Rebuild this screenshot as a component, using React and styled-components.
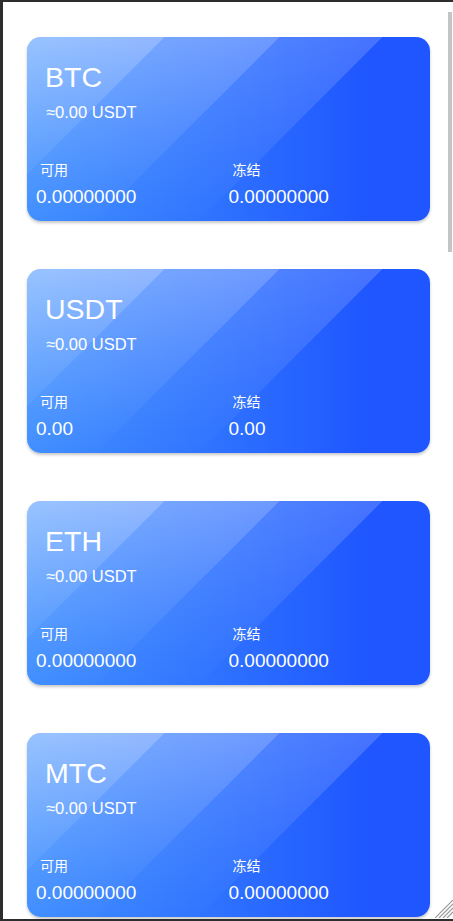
import React from "react";
import styled, { createGlobalStyle } from "styled-components";

const GlobalStyle = createGlobalStyle`
  html, body {
    margin: 0;
    padding: 0;
    background: #fff;
  }
  body {
    font-family: "Liberation Sans", "Noto Sans CJK SC", Arial, sans-serif;
  }
`;

const Frame = styled.div`
  position: relative;
  box-sizing: border-box;
  width: 453px;
  height: 921px;
  overflow: hidden;
  border-top: 2px solid #2d2d2d;
  border-left: 3px solid #2d2d2d;
  border-bottom: 2px solid #2d2d2d;
  background: #fff;
`;

const List = styled.div`
  display: flex;
  flex-direction: column;
  gap: 48px;
  padding: 35px 23px 0 24px;
`;

const Card = styled.div`
  position: relative;
  overflow: hidden;
  height: 184px;
  border-radius: 14px;
  display: flex;
  flex-direction: column;
  color: #fff;
  background: linear-gradient(to right, #3e8eff 0%, #2d70ff 50%, #1f56ff 85%);
  box-shadow: 0 2px 3px rgba(0, 0, 0, 0.22);

  &::before {
    content: "";
    position: absolute;
    inset: 0;
    background: linear-gradient(
      135deg,
      rgba(255, 255, 255, 0.47) 0 23.5%,
      rgba(255, 255, 255, 0.33) 23.5% 43%,
      rgba(255, 255, 255, 0.18) 43% 60.5%,
      transparent 60.5%
    );
    -webkit-mask-image: linear-gradient(to bottom, #000, rgba(0, 0, 0, 0.04));
    mask-image: linear-gradient(to bottom, #000, rgba(0, 0, 0, 0.04));
  }

  & > * {
    position: relative;
  }
`;

const Head = styled.div`
  padding: 26px 18px 0;
`;

const Coin = styled.div`
  font-size: 28.5px;
  line-height: 28px;
`;

const Worth = styled.div`
  margin-top: 13px;
  padding-left: 1px;
  font-size: 16.5px;
  line-height: 16px;
`;

const Balances = styled.div`
  margin-top: auto;
  padding: 0 9px 15px;
  display: grid;
  grid-template-columns: 1fr 1fr;
`;

const Label = styled.div`
  padding-left: 4px;
  font-size: 14px;
  line-height: 14px;
`;

const Amount = styled.div`
  margin-top: 10px;
  font-size: 19px;
  line-height: 19px;
`;

const Thumb = styled.div`
  position: absolute;
  top: 10px;
  right: 1px;
  width: 4px;
  height: 240px;
  background: #c4c4c4;
`;

const Grip = styled.svg`
  position: absolute;
  right: 0;
  bottom: 1px;
  width: 18px;
  height: 18px;
`;

const coins = [
  { name: "BTC", digits: 8 },
  { name: "USDT", digits: 2 },
  { name: "ETH", digits: 8 },
  { name: "MTC", digits: 8 },
];

const AssetCard = ({ name, digits }) => {
  const zero = (0).toFixed(digits);
  return (
    <Card>
      <Head>
        <Coin>{name}</Coin>
        <Worth>≈0.00 USDT</Worth>
      </Head>
      <Balances>
        <div>
          <Label>可用</Label>
          <Amount>{zero}</Amount>
        </div>
        <div>
          <Label>冻结</Label>
          <Amount>{zero}</Amount>
        </div>
      </Balances>
    </Card>
  );
};

const App = () => (
  <>
    <GlobalStyle />
    <Frame>
      <List>
        {coins.map((c) => (
          <AssetCard key={c.name} {...c} />
        ))}
      </List>
      <Thumb />
      <Grip viewBox="0 0 18 18">
        {[0, 4, 8, 12].map((k) => (
          <line
            key={k}
            x1={k}
            y1="18"
            x2="18"
            y2={k}
            stroke="#9a9a9a"
            strokeWidth="1.2"
          />
        ))}
      </Grip>
    </Frame>
  </>
);

export default App;
